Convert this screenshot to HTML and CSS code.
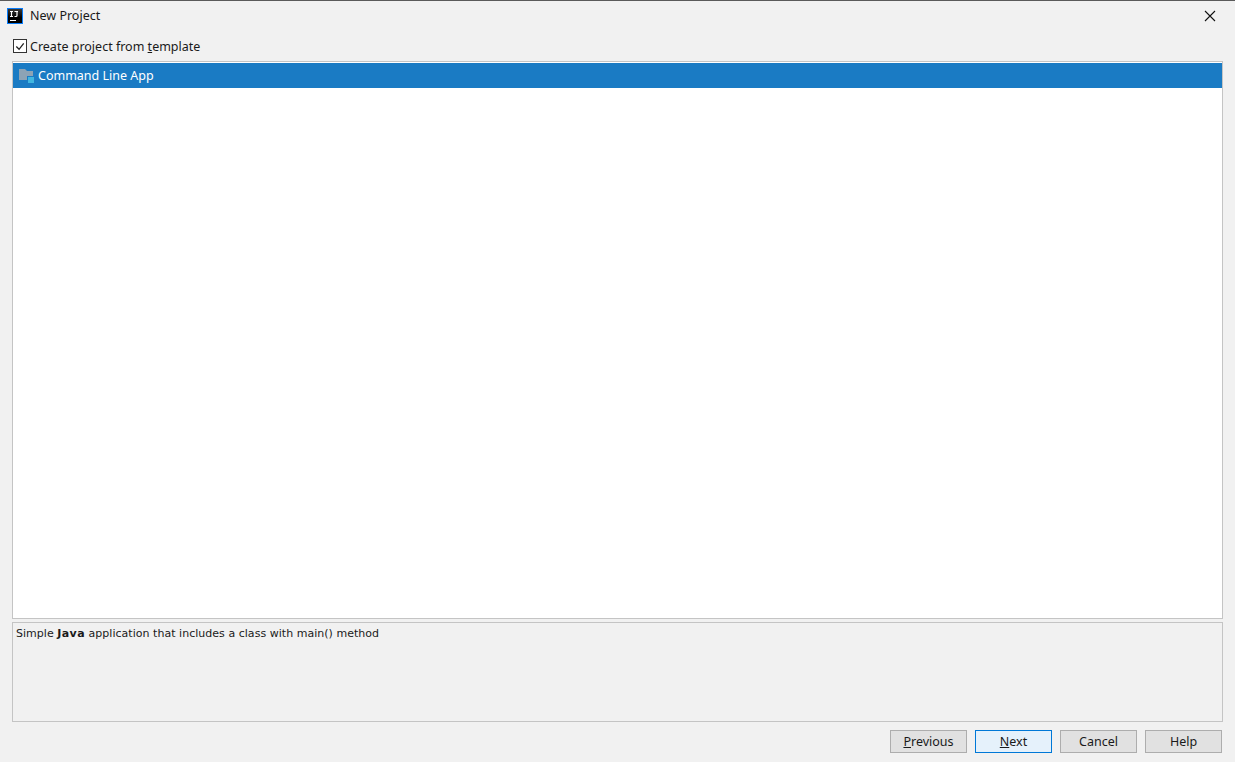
FILE: index.html
```html
<!DOCTYPE html>
<html lang="en">
<head>
<meta charset="utf-8">
<title>New Project</title>
<link rel="stylesheet" href="styles.css">
</head>
<body>
<div class="dialog">
  <header class="titlebar">
    <svg class="app-icon" width="16" height="16" viewBox="0 0 16 16">
      <defs><linearGradient id="ij" x1="0" y1="0" x2="0" y2="1"><stop offset="0" stop-color="#3a3a3a"/><stop offset="0.6" stop-color="#000"/></linearGradient></defs>
      <rect x="0.5" y="0.5" width="15" height="15" fill="url(#ij)" stroke="#087cfa"/>
      <path d="M3 3.5h3M4.5 3.5v5M3 8.5h3M7.5 3.5h3.5M10 3.5v4q0 1-1 1H7.5" fill="none" stroke="#fff" stroke-width="1.2"/>
      <rect x="3" y="12" width="6" height="1" fill="#fff"/>
    </svg>
    <span class="title">New Project</span>
    <svg class="close" width="12" height="12" viewBox="0 0 12 12">
      <path d="M1 1l10 10M11 1L1 11" stroke="#111" stroke-width="1.1" fill="none"/>
    </svg>
  </header>
  <label class="check-row">
    <span class="checkbox">
      <svg width="13" height="13" viewBox="0 0 13 13"><path d="M2.5 6.5l3 3 5-6.5" stroke="#222" stroke-width="1.4" fill="none"/></svg>
    </span>
    <span>Create project from <u>t</u>emplate</span>
  </label>
  <div class="list">
    <div class="row">
      <svg class="folder" width="15" height="14" viewBox="0 0 15 14">
        <path d="M0 0h6l2 2h6v9H0z" fill="#8ca3b5"/>
        <rect x="8" y="7" width="7" height="7" fill="#1a7bc4"/>
        <rect x="9" y="8" width="6" height="6" fill="#40b6e0"/>
      </svg>
      <span>Command Line App</span>
    </div>
  </div>
  <div class="desc">Simple <b>Java</b> application that includes a class with main() method</div>
  <footer class="buttons">
    <button class="btn"><u>P</u>revious</button>
    <button class="btn primary"><u>N</u>ext</button>
    <button class="btn">Cancel</button>
    <button class="btn">Help</button>
  </footer>
</div>
</body>
</html>
```
FILE: styles.css
```css
* { box-sizing: border-box; }
html, body { margin: 0; height: 100%; }
body {
  background: #f0f0f0;
  color: #1a1a1a;
  font-family: "Noto Sans", "Open Sans", "Liberation Sans", sans-serif;
  font-size: 12.5px;
}
.dialog {
  height: 762px;
  display: flex;
  flex-direction: column;
  border-top: 1px solid #5a5a5a;
  padding: 0 12px;
  background: #f1f1f1;
}
.titlebar {
  height: 29px;
  margin: 0 -12px 1px;
  padding: 0 19px 0 7px;
  display: flex;
  align-items: center;
}
.title { margin-left: 7px; flex: 1; }
.check-row {
  height: 30px;
  display: flex;
  align-items: center;
  gap: 3px;
}
.checkbox {
  width: 14px;
  height: 14px;
  margin-left: 1px;
  background: #fff;
  border: 1px solid #333;
  display: flex;
  align-items: center;
  justify-content: center;
}
.list {
  height: 558px;
  background: #fff;
  border: 1px solid #c4c4c4;
  padding-top: 1px;
}
.row {
  height: 25px;
  background: #1a7bc4;
  color: #fff;
  display: flex;
  align-items: center;
  gap: 4px;
  padding: 0 0 1px 6px;
}
.folder { margin-top: 2px; }
.desc {
  height: 100px;
  margin-top: 3px;
  border: 1px solid #c4c4c4;
  padding: 3px 3px;
  font-family: "DejaVu Sans", sans-serif;
  font-size: 11px;
  letter-spacing: 0.03px;
  line-height: 15px;
}
.desc b { letter-spacing: 0.4px; }
.buttons {
  margin-top: 8px;
  padding-right: 1px;
  display: flex;
  justify-content: flex-end;
  gap: 8px;
}
.btn {
  width: 77px;
  height: 23px;
  padding: 0 0 1px;
  background: #e1e1e1;
  border: 1px solid #adadad;
  color: #1a1a1a;
  font: inherit;
}
.btn.primary {
  background: #e5f1fb;
  border-color: #0078d7;
}
```
